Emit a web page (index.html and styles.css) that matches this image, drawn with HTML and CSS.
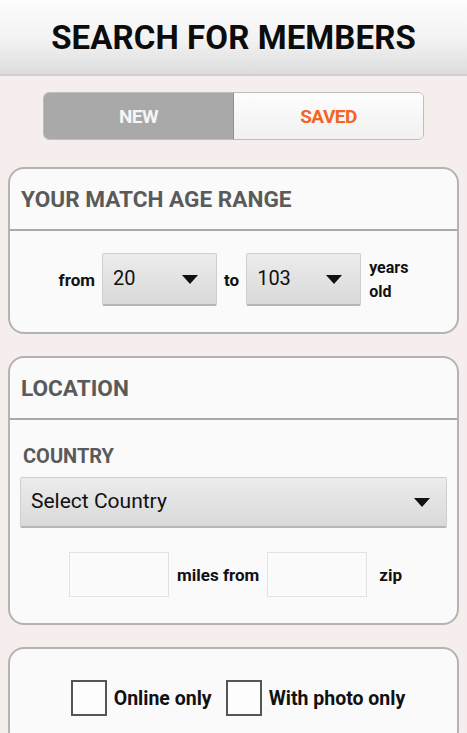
FILE: index.html
```html
<!DOCTYPE html>
<html>
<head>
<meta charset="utf-8">
<link rel="stylesheet" href="styles.css">
</head>
<body>
<header class="topbar"><h1>SEARCH FOR MEMBERS</h1></header>
<main class="content">
  <div class="segment">
    <div class="seg seg-on">NEW</div>
    <div class="seg seg-off">SAVED</div>
  </div>

  <section class="card">
    <h2 class="card-title">YOUR MATCH AGE RANGE</h2>
    <div class="card-body age-row">
      <span class="lbl">from</span>
      <div class="spinner small"><span>20</span><svg width="16" height="9" viewBox="0 0 16 9"><path d="M0 0H16L8 9Z" fill="#111"/></svg></div>
      <span class="lbl">to</span>
      <div class="spinner small"><span>103</span><svg width="16" height="9" viewBox="0 0 16 9"><path d="M0 0H16L8 9Z" fill="#111"/></svg></div>
      <span class="lbl years">years<br>old</span>
    </div>
  </section>

  <section class="card">
    <h2 class="card-title">LOCATION</h2>
    <div class="card-body loc">
      <div class="sub">COUNTRY</div>
      <div class="spinner wide"><span>Select Country</span><svg width="16" height="9" viewBox="0 0 16 9"><path d="M0 0H16L8 9Z" fill="#111"/></svg></div>
      <div class="miles-row">
        <div class="field"></div>
        <span class="lbl">miles from</span>
        <div class="field"></div>
        <span class="lbl zip">zip</span>
      </div>
    </div>
  </section>

  <section class="card last">
    <div class="check-row">
      <span class="box"></span><span class="lbl big">Online only</span>
      <span class="box"></span><span class="lbl big">With photo only</span>
    </div>
  </section>
</main>
</body>
</html>
```
FILE: styles.css
```css
* { box-sizing: border-box; }
html, body { margin: 0; padding: 0; }
body {
  width: 467px;
  height: 733px;
  overflow: hidden;
  background: #f6eded;
  font-family: Roboto, "Liberation Sans", sans-serif;
}
.topbar {
  height: 76px;
  background: linear-gradient(#fdfdfd 0%, #f2f2f2 55%, #dcdcdc 100%);
  border-bottom: 2px solid #cfcfcf;
  display: flex;
  align-items: center;
  justify-content: center;
}
.topbar h1 {
  margin: 0;
  font-size: 33px;
  font-weight: 700;
  color: #0c0c0c;
  letter-spacing: 0.1px;
}
.content {
  padding: 16px 8px 0 8px;
  display: flex;
  flex-direction: column;
  gap: 22px;
}
.segment {
  margin: 0 35px 5px 35px;
  height: 48px;
  display: flex;
  border: 1px solid #bdbdbd;
  border-radius: 6px;
  overflow: hidden;
}
.seg {
  flex: 1;
  display: flex;
  align-items: center;
  justify-content: center;
  font-weight: 700;
  font-size: 19px;
  letter-spacing: -0.5px;
}
.seg-on {
  background: #a9a9a9;
  color: #f6f6f6;
  border-right: 1px solid #909090;
}
.seg-off {
  background: linear-gradient(#fdfdfd, #f1f1f1);
  color: #f26522;
}
.card {
  background: #fafafa;
  border: 2px solid #b3b3b3;
  border-radius: 16px;
}
.card-title {
  margin: 0;
  height: 62px;
  border-bottom: 2px solid #a9a9a9;
  display: flex;
  align-items: center;
  padding-left: 11px;
  font-size: 22.6px;
  font-weight: 700;
  color: #5a5a5a;
}
.age-row {
  height: 101px;
  display: flex;
  align-items: center;
  justify-content: center;
  gap: 7px;
  padding-bottom: 4px;
}
.lbl {
  font-weight: 700;
  font-size: 17px;
  color: #111;
}
.years { line-height: 24px; margin-left: 1px; font-size: 16px; }
.spinner {
  height: 53px;
  background: linear-gradient(#ececec, #d9d9d9);
  border: 1px solid #cfcfcf;
  border-bottom: 2px solid #b6b6b6;
  border-radius: 2px;
  display: flex;
  align-items: center;
  justify-content: space-between;
  padding: 0 18px 0 10px;
  font-size: 20px;
  color: #111;
}
.spinner span { padding-bottom: 3px; }
.spinner.small { width: 115px; }
.loc { padding: 24px 10px 0 10px; }
.sub {
  font-size: 20px;
  font-weight: 700;
  color: #5a5a5a;
  padding-left: 3px;
  height: 24px;
  margin-bottom: 9px;
}
.spinner.wide {
  height: 51px;
  font-size: 21px;
  padding: 0 16px 0 10px;
}
.miles-row {
  height: 95px;
  display: flex;
  align-items: center;
  justify-content: center;
  gap: 8px;
  padding-bottom: 2px;
  padding-left: 4px;
}
.field {
  width: 100px;
  height: 45px;
  background: #fbfbfb;
  border: 1px solid #e2e2e2;
}
.zip { margin-left: 4px; }
.card.last { height: 100px; }
.check-row {
  height: 98px;
  display: flex;
  align-items: center;
  justify-content: center;
  gap: 7px;
  padding-left: 16px;
}
.box {
  width: 36px;
  height: 36px;
  border: 2px solid #555;
  background: #fdfdfd;
}
.lbl.big { font-size: 19.5px; margin-right: 7px; }
```
